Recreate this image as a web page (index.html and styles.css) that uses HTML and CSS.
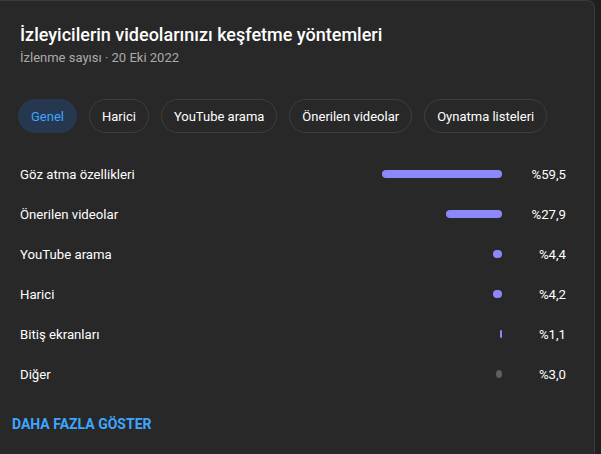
FILE: index.html
```html
<!DOCTYPE html>
<html lang="tr">

<head>
    <meta charset="UTF-8">
    <meta name="viewport" content="width=device-width, initial-scale=1.0">
    <title>Trafik kaynakları</title>
    <link rel="stylesheet" href="styles.css">
</head>

<body>
    <div class="card">
        <div class="card-title">İzleyicilerin videolarınızı keşfetme yöntemleri</div>
        <div class="card-sub">İzlenme sayısı · 20 Eki 2022</div>

        <div class="chips">
            <button class="chip active">Genel</button>
            <button class="chip">Harici</button>
            <button class="chip">YouTube arama</button>
            <button class="chip">Önerilen videolar</button>
            <button class="chip">Oynatma listeleri</button>
        </div>

        <div class="rows">
            <div class="row">
                <div class="label">Göz atma özellikleri</div>
                <div class="track"><div class="bar" style="width: 120px"></div></div>
                <div class="value">%59,5</div>
            </div>
            <div class="row">
                <div class="label">Önerilen videolar</div>
                <div class="track"><div class="bar" style="width: 56px"></div></div>
                <div class="value">%27,9</div>
            </div>
            <div class="row">
                <div class="label">YouTube arama</div>
                <div class="track"><div class="bar" style="width: 9px"></div></div>
                <div class="value">%4,4</div>
            </div>
            <div class="row">
                <div class="label">Harici</div>
                <div class="track"><div class="bar" style="width: 9px"></div></div>
                <div class="value">%4,2</div>
            </div>
            <div class="row">
                <div class="label">Bitiş ekranları</div>
                <div class="track"><div class="bar" style="width: 2px"></div></div>
                <div class="value">%1,1</div>
            </div>
            <div class="row">
                <div class="label">Diğer</div>
                <div class="track"><div class="bar other" style="width: 6px"></div></div>
                <div class="value">%3,0</div>
            </div>
        </div>

        <button class="more">Daha fazla göster</button>
    </div>
</body>

</html>
```

FILE: styles.css
```css
* {
    box-sizing: border-box;
}

body {
    margin: 0;
    background-color: #1f1f1f;
    font-family: Roboto, "Noto Sans", Arial, sans-serif;
    color: #fff;
}

.card {
    width: 595px;
    height: 454px;
    background-color: #282828;
    border-top: 1px solid #3a3a3a;
    border-right: 1px solid #3a3a3a;
    border-top-right-radius: 8px;
    padding: 21px 28px 0 20px;
}

.card-title {
    font-size: 18px;
    font-weight: 500;
    line-height: 26px;
}

.card-sub {
    margin-top: 1px;
    font-size: 13px;
    line-height: 18px;
    color: #aaaaaa;
}

.chips {
    display: flex;
    gap: 12px;
    margin: 32px 0 21px -2px;
}

.chip {
    flex-shrink: 0;
    height: 34px;
    padding: 0 12px;
    border: 1px solid #3e3e3e;
    border-radius: 17px;
    background-color: transparent;
    color: #fff;
    font-family: inherit;
    font-size: 13px;
    font-weight: 400;
    white-space: nowrap;
}

.chip.active {
    background-color: #263850;
    border-color: #263850;
    color: #3ea6ff;
}

.row {
    display: grid;
    grid-template-columns: 1fr 200px 64px;
    align-items: center;
    height: 40px;
    font-size: 13.2px;
}

.track {
    display: flex;
    justify-content: flex-end;
}

.bar {
    height: 8px;
    border-radius: 4px;
    background-color: #8c88f9;
}

.bar.other {
    background-color: #5f5f5f;
    border-radius: 3px / 4px;
}

.value {
    text-align: right;
}

.more {
    margin: 20px 0 0 -8px;
    padding: 0;
    border: none;
    background: none;
    color: #3ea6ff;
    font-family: inherit;
    font-size: 14px;
    font-weight: 700;
    line-height: 20px;
    text-transform: uppercase;
}
```
